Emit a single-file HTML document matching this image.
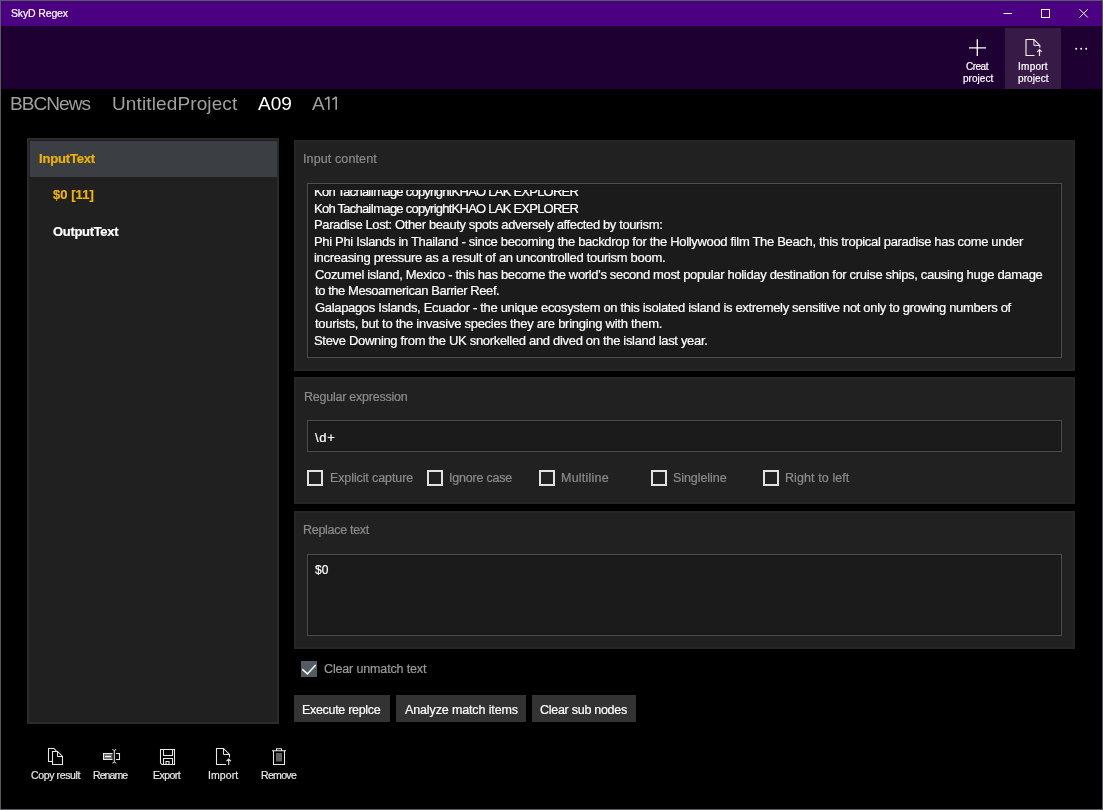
<!DOCTYPE html>
<html><head><meta charset="utf-8"><title>SkyD Regex</title>
<style>
html,body{margin:0;padding:0;background:#000;width:1103px;height:810px;overflow:hidden}
.b{position:absolute;box-sizing:border-box}
.t{position:absolute;white-space:pre;font-family:'Liberation Sans', sans-serif;will-change:transform;-webkit-text-stroke:0.2px currentColor}
.clip{position:absolute;left:307px;top:190px;width:754px;height:166px;overflow:hidden}
</style></head><body>
<div class="b" style="left:0px;top:0px;width:1103px;height:810px;background:#000;"></div><div class="b" style="left:1px;top:1px;width:1101px;height:25px;background:#4b0082;"></div><div class="b" style="left:1px;top:26px;width:1101px;height:63px;background:#1f0033;"></div><div class="b" style="left:1005px;top:28px;width:56px;height:61px;background:#371a46;"></div><div class="b" style="left:0px;top:0px;width:1103px;height:1px;background:#565c60;"></div><div class="b" style="left:0px;top:809px;width:1103px;height:1px;background:#565c60;"></div><div class="b" style="left:0px;top:0px;width:1px;height:810px;background:#565c60;"></div><div class="b" style="left:1102px;top:0px;width:1px;height:810px;background:#565c60;"></div><div class="b" style="left:27px;top:138px;width:252px;height:586px;background:#202020;box-shadow:inset 0 0 0 2px #2b2b2b;"></div><div class="b" style="left:30px;top:141px;width:247px;height:36px;background:#3b3f43;"></div><div class="b" style="left:294px;top:140px;width:781px;height:231px;background:#212121;box-shadow:inset 0 0 0 2px #262626;"></div><div class="b" style="left:307px;top:183px;width:755px;height:175px;background:#1b1b1b;border:1px solid #4d4d4d;box-shadow:inset 0 0 0 1px #171717;"></div><div class="b" style="left:294px;top:377px;width:781px;height:127px;background:#212121;box-shadow:inset 0 0 0 2px #262626;"></div><div class="b" style="left:307px;top:420px;width:755px;height:32px;background:#1b1b1b;border:1px solid #4d4d4d;box-shadow:inset 0 0 0 1px #171717;"></div><div class="b" style="left:307px;top:470px;width:16px;height:16px;box-shadow:inset 0 0 0 2px #e2e2e2;"></div><div class="b" style="left:427px;top:470px;width:16px;height:16px;box-shadow:inset 0 0 0 2px #e2e2e2;"></div><div class="b" style="left:539px;top:470px;width:16px;height:16px;box-shadow:inset 0 0 0 2px #e2e2e2;"></div><div class="b" style="left:651px;top:470px;width:16px;height:16px;box-shadow:inset 0 0 0 2px #e2e2e2;"></div><div class="b" style="left:763px;top:470px;width:16px;height:16px;box-shadow:inset 0 0 0 2px #e2e2e2;"></div><div class="b" style="left:294px;top:511px;width:781px;height:138px;background:#212121;box-shadow:inset 0 0 0 2px #262626;"></div><div class="b" style="left:307px;top:554px;width:755px;height:82px;background:#1b1b1b;border:1px solid #4d4d4d;box-shadow:inset 0 0 0 1px #171717;"></div><div class="b" style="left:301px;top:661px;width:16px;height:16px;background:#515c63;"></div><svg class="b" style="left:301px;top:661px" width="16" height="16" viewBox="0 0 16 16"><path d="M1.4 8.4 L6.4 12.9 L14.7 3.9" fill="none" stroke="#fff" stroke-width="1.5"/></svg><div class="b" style="left:294px;top:695px;width:96px;height:27px;background:#333333;"></div><div class="b" style="left:396px;top:695px;width:130px;height:27px;background:#333333;"></div><div class="b" style="left:532px;top:695px;width:104px;height:27px;background:#333333;"></div>

<!-- window controls -->
<svg class="b" style="left:995px;top:0px" width="100" height="26" viewBox="0 0 100 26">
 <path d="M8.5 13.5 H17" stroke="#fff" stroke-width="1"/>
 <rect x="46.5" y="9.5" width="8" height="8" fill="none" stroke="#fff" stroke-width="1"/>
 <path d="M84.5 9.2 L92.8 17.5 M92.8 9.2 L84.5 17.5" stroke="#fff" stroke-width="1"/>
</svg>
<!-- A11 ones -->
<svg class="b" style="left:320px;top:92px" width="24" height="22" viewBox="0 0 24 22">
 <path d="M8.8 4.8 V17.8 M8.8 4.8 L4.9 7.6" fill="none" stroke="#a0a0a0" stroke-width="1.6" stroke-linejoin="round"/>
 <path d="M16.2 4.8 V17.8 M16.2 4.8 L12.3 7.6" fill="none" stroke="#a0a0a0" stroke-width="1.6" stroke-linejoin="round"/>
</svg>
<!-- plus -->
<svg class="b" style="left:960px;top:30px" width="36" height="30" viewBox="0 0 36 30">
 <path d="M9 17.8 H26 M17.3 9.3 V26" stroke="#fff" stroke-width="1.3"/>
</svg>
<!-- import doc (top) -->
<svg class="b" style="left:1020px;top:34px" width="28" height="26" viewBox="0 0 28 26">
 <path d="M14.5 21.5 H6 V5.5 H13.9 L19.8 11.4 V13.8" fill="none" stroke="#f0f0f0" stroke-width="1.15"/>
 <path d="M13.9 5.5 V11.4 H19.8" fill="none" stroke="#f0f0f0" stroke-width="1"/>
 <path d="M19.5 22 V15.6 M17.2 17.9 L19.5 15.6 L21.8 17.9" fill="none" stroke="#f0f0f0" stroke-width="1.2"/>
</svg>
<!-- more dots -->
<svg class="b" style="left:1070px;top:40px" width="24" height="16" viewBox="0 0 24 16">
 <circle cx="6.2" cy="8.7" r="1" fill="#fff"/><circle cx="11.2" cy="8.7" r="1" fill="#fff"/><circle cx="16.2" cy="8.7" r="1" fill="#fff"/>
</svg>
<!-- copy -->
<svg class="b" style="left:44px;top:744px" width="24" height="24" viewBox="0 0 24 24">
 <path d="M8.5 17.5 H4.5 V4.5 H10 L12.3 6.8" fill="none" stroke="#e8e8e8" stroke-width="1.05"/>
 <path d="M8.5 20.5 V7.5 H13.5 L18.5 12.5 V20.5 Z" fill="none" stroke="#e8e8e8" stroke-width="1.05"/>
 <path d="M13.5 7.5 V12.5 H18.5" fill="none" stroke="#e8e8e8" stroke-width="1"/>
</svg>
<!-- rename -->
<svg class="b" style="left:100px;top:744px" width="24" height="24" viewBox="0 0 24 24">
 <path d="M12.6 9.5 H3.5 V15.5 H12.6 M16 9.5 H19.5 V15.5 H16" fill="none" stroke="#e8e8e8" stroke-width="1.05"/>
 <rect x="4" y="10" width="8.5" height="5" fill="#6a6a6a"/>
 <path d="M5 12.5 H11" stroke="#f0f0f0" stroke-width="1.4"/>
 <path d="M14.3 6.8 V17.8 M12.4 5.6 Q14.3 5.8 14.3 6.8 Q14.3 5.8 16.2 5.6 M12.4 19 Q14.3 18.8 14.3 17.8 Q14.3 18.8 16.2 19" fill="none" stroke="#e8e8e8" stroke-width="1"/>
</svg>
<!-- save -->
<svg class="b" style="left:156px;top:744px" width="24" height="24" viewBox="0 0 24 24">
 <path d="M4.5 5.5 H18.5 V20.5 H6 L4.5 19 Z" fill="none" stroke="#e8e8e8" stroke-width="1.05"/>
 <path d="M7.5 5.5 V11.5 H16.5 V5.5" fill="none" stroke="#e8e8e8" stroke-width="1.05"/>
 <path d="M7.5 20.5 V14.5 H16.5 V20.5 M10 20.5 V17.5 H13 V20.5" fill="none" stroke="#e8e8e8" stroke-width="1.05"/>
</svg>
<!-- import -->
<svg class="b" style="left:212px;top:744px" width="24" height="24" viewBox="0 0 24 24">
 <path d="M14 20.5 H4.5 V4.5 H11.5 L17.5 10.5 V13.5" fill="none" stroke="#e8e8e8" stroke-width="1.05"/>
 <path d="M11.5 4.5 V10.5 H17.5" fill="none" stroke="#e8e8e8" stroke-width="1"/>
 <path d="M16.7 21 V15 M14.5 17.2 L16.7 15 L18.9 17.2" fill="none" stroke="#e8e8e8" stroke-width="1.1"/>
</svg>
<!-- remove -->
<svg class="b" style="left:268px;top:744px" width="24" height="24" viewBox="0 0 24 24">
 <path d="M4 6.8 H18 M8.5 6.8 V4.8 H13.5 V6.8" fill="none" stroke="#e8e8e8" stroke-width="1.05"/>
 <path d="M5.5 6.8 V20.5 H16.5 V6.8" fill="none" stroke="#e8e8e8" stroke-width="1.05"/>
 <path d="M9 9 V17.5 M11 9 V17.5 M13 9 V17.5" stroke="#d8d8d8" stroke-width="0.9"/>
</svg>

<div class="t" style="left:10.70px;top:8.00px;font-size:10.5px;line-height:10.5px;letter-spacing:-0.144px;color:#ffffff;">SkyD Regex</div>
<div class="t" style="left:10.20px;top:94.00px;font-size:19px;line-height:19px;letter-spacing:-0.917px;color:#a0a0a0;-webkit-text-stroke:0;">BBCNews</div>
<div class="t" style="left:111.90px;top:94.00px;font-size:19px;line-height:19px;letter-spacing:0.121px;color:#a0a0a0;-webkit-text-stroke:0;">UntitledProject</div>
<div class="t" style="left:258.00px;top:94.00px;font-size:19px;line-height:19px;letter-spacing:0.000px;color:#ffffff;-webkit-text-stroke:0;">A09</div>
<div class="t" style="left:311.90px;top:94.00px;font-size:19px;line-height:19px;letter-spacing:0.000px;color:#a0a0a0;-webkit-text-stroke:0;">A</div>
<div class="t" style="left:39.00px;top:152.00px;font-size:13px;line-height:13px;letter-spacing:-0.175px;color:#f0b400;font-weight:bold;">InputText</div>
<div class="t" style="left:53.00px;top:188.00px;font-size:13px;line-height:13px;letter-spacing:0.050px;color:#f0b400;font-weight:bold;">$0 [11]</div>
<div class="t" style="left:53.00px;top:225.00px;font-size:13px;line-height:13px;letter-spacing:-0.322px;color:#ffffff;font-weight:bold;">OutputText</div>
<div class="t" style="left:303.40px;top:153.00px;font-size:12.5px;line-height:12.5px;letter-spacing:0.117px;color:#8c8c8c;">Input content</div>
<div class="t" style="left:303.50px;top:391.00px;font-size:12.5px;line-height:12.5px;letter-spacing:-0.235px;color:#8c8c8c;">Regular expression</div>
<div class="t" style="left:314.70px;top:431.00px;font-size:13px;line-height:13px;letter-spacing:0.750px;color:#ffffff;">\d+</div>
<div class="t" style="left:329.50px;top:472.00px;font-size:12.5px;line-height:12.5px;letter-spacing:-0.107px;color:#8c8c8c;">Explicit capture</div>
<div class="t" style="left:449.10px;top:472.00px;font-size:12.5px;line-height:12.5px;letter-spacing:-0.200px;color:#8c8c8c;">Ignore case</div>
<div class="t" style="left:561.40px;top:472.00px;font-size:12.5px;line-height:12.5px;letter-spacing:0.237px;color:#8c8c8c;">Multiline</div>
<div class="t" style="left:673.40px;top:472.00px;font-size:12.5px;line-height:12.5px;letter-spacing:-0.067px;color:#8c8c8c;">Singleline</div>
<div class="t" style="left:785.40px;top:472.00px;font-size:12.5px;line-height:12.5px;letter-spacing:0.092px;color:#8c8c8c;">Right to left</div>
<div class="t" style="left:303.30px;top:524.00px;font-size:12.5px;line-height:12.5px;letter-spacing:-0.291px;color:#8c8c8c;">Replace text</div>
<div class="t" style="left:315.00px;top:564.00px;font-size:12px;line-height:12px;letter-spacing:0.100px;color:#ffffff;">$0</div>
<div class="t" style="left:323.90px;top:663.00px;font-size:12.5px;line-height:12.5px;letter-spacing:-0.147px;color:#9a9a9a;">Clear unmatch text</div>
<div class="t" style="left:301.70px;top:704.00px;font-size:12.5px;line-height:12.5px;letter-spacing:-0.308px;color:#ffffff;">Execute replce</div>
<div class="t" style="left:404.60px;top:704.00px;font-size:12.5px;line-height:12.5px;letter-spacing:-0.128px;color:#ffffff;">Analyze match items</div>
<div class="t" style="left:540.40px;top:704.00px;font-size:12.5px;line-height:12.5px;letter-spacing:-0.271px;color:#ffffff;">Clear sub nodes</div>
<div class="t" style="left:30.60px;top:770.00px;font-size:10.5px;line-height:10.5px;letter-spacing:-0.370px;color:#e8e8e8;">Copy result</div>
<div class="t" style="left:93.00px;top:770.00px;font-size:10.5px;line-height:10.5px;letter-spacing:-0.900px;color:#e8e8e8;">Rename</div>
<div class="t" style="left:152.80px;top:770.00px;font-size:10.5px;line-height:10.5px;letter-spacing:-0.540px;color:#e8e8e8;">Export</div>
<div class="t" style="left:207.70px;top:770.00px;font-size:10.5px;line-height:10.5px;letter-spacing:0.100px;color:#e8e8e8;">Import</div>
<div class="t" style="left:261.10px;top:770.00px;font-size:10.5px;line-height:10.5px;letter-spacing:-0.660px;color:#e8e8e8;">Remove</div>
<div class="t" style="left:965.90px;top:62.00px;font-size:10px;line-height:10px;letter-spacing:-0.500px;color:#ffffff;">Creat</div>
<div class="t" style="left:962.60px;top:74.00px;font-size:10px;line-height:10px;letter-spacing:0.033px;color:#ffffff;">project</div>
<div class="t" style="left:1017.80px;top:62.00px;font-size:10px;line-height:10px;letter-spacing:0.260px;color:#ffffff;">Import</div>
<div class="t" style="left:1018.40px;top:74.00px;font-size:10px;line-height:10px;letter-spacing:0.083px;color:#ffffff;">project</div>
<div class="clip">
<div class="t" style="left:7.20px;top:-5.00px;font-size:13px;line-height:13px;letter-spacing:-0.759px;color:#ffffff">Koh TachaiImage copyrightKHAO LAK EXPLORER</div>
<div class="t" style="left:7.20px;top:12.00px;font-size:13px;line-height:13px;letter-spacing:-0.759px;color:#ffffff">Koh TachaiImage copyrightKHAO LAK EXPLORER</div>
<div class="t" style="left:7.20px;top:28.00px;font-size:13px;line-height:13px;letter-spacing:-0.379px;color:#ffffff">Paradise Lost: Other beauty spots adversely affected by tourism:</div>
<div class="t" style="left:7.20px;top:45.00px;font-size:13px;line-height:13px;letter-spacing:-0.326px;color:#ffffff">Phi Phi Islands in Thailand - since becoming the backdrop for the Hollywood film The Beach, this tropical paradise has come under</div>
<div class="t" style="left:7.20px;top:61.00px;font-size:13px;line-height:13px;letter-spacing:-0.292px;color:#ffffff">increasing pressure as a result of an uncontrolled tourism boom.</div>
<div class="t" style="left:8.20px;top:78.00px;font-size:13px;line-height:13px;letter-spacing:-0.332px;color:#ffffff">Cozumel island, Mexico - this has become the world's second most popular holiday destination for cruise ships, causing huge damage</div>
<div class="t" style="left:8.20px;top:94.00px;font-size:13px;line-height:13px;letter-spacing:-0.438px;color:#ffffff">to the Mesoamerican Barrier Reef.</div>
<div class="t" style="left:8.20px;top:111.00px;font-size:13px;line-height:13px;letter-spacing:-0.330px;color:#ffffff">Galapagos Islands, Ecuador - the unique ecosystem on this isolated island is extremely sensitive not only to growing numbers of</div>
<div class="t" style="left:8.20px;top:127.00px;font-size:13px;line-height:13px;letter-spacing:-0.269px;color:#ffffff">tourists, but to the invasive species they are bringing with them.</div>
<div class="t" style="left:7.20px;top:144.00px;font-size:13px;line-height:13px;letter-spacing:-0.320px;color:#ffffff">Steve Downing from the UK snorkelled and dived on the island last year.</div>
</div>
</body></html>
